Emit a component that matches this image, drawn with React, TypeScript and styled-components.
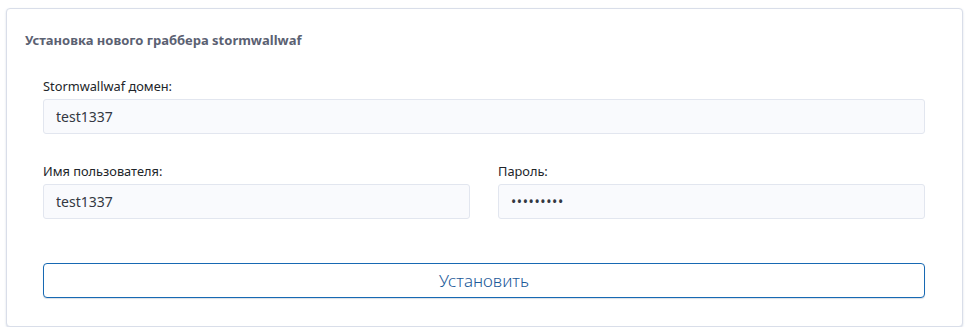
import React from 'react'
import styled, { createGlobalStyle } from 'styled-components'

const GlobalStyle = createGlobalStyle`
  html, body {
    margin: 0;
    padding: 0;
    background: #ffffff;
  }
  body {
    font-family: 'Noto Sans', 'Open Sans', Arial, sans-serif;
  }
`

const Page = styled.div`
  padding: 8px 8px 0 6px;
`

const Card = styled.div`
  border: 1px solid #d9dee9;
  border-radius: 4px;
  background: #fff;
  box-shadow: 0 1px 2px rgba(160, 175, 200, 0.45);
`

const Header = styled.div`
  padding: 23px 18px 0;
`

const Title = styled.h3`
  margin: 0;
  font-size: 13px;
  line-height: 16px;
  font-weight: 700;
  color: #5b6172;
`

const Body = styled.div`
  padding: 29px 37px 28px 36px;
  display: flex;
  flex-direction: column;
`

const Row = styled.div<{ $cols?: number; $mt?: number }>`
  display: grid;
  grid-template-columns: repeat(${p => p.$cols ?? 1}, 1fr);
  column-gap: 28px;
  margin-top: ${p => p.$mt ?? 0}px;
`

const Field = styled.label`
  display: flex;
  flex-direction: column;
  gap: 4px;
`

const LabelText = styled.span`
  font-size: 12.8px;
  line-height: 18px;
  color: #212529;
`

const Input = styled.input`
  box-sizing: border-box;
  height: 35px;
  width: 100%;
  padding: 0 12px;
  border: 1px solid #e2e6ef;
  border-radius: 3px;
  background: #f9fafd;
  font-family: inherit;
  font-size: 14px;
  color: #333842;
  outline: none;
  &[type='password'] {
    font-size: 14px;
    letter-spacing: 0.6px;
  }
`

const SubmitButton = styled.button`
  margin-top: 44px;
  height: 35px;
  width: 100%;
  border: 1px solid #1769b3;
  border-radius: 4px;
  background: #fff;
  color: #1d5a99;
  font-family: inherit;
  font-size: 17px;
  font-weight: 300;
  cursor: pointer;
  box-shadow: 0 1px 1px rgba(0, 40, 90, 0.15);
`

const App = () => {
  return (
    <>
      <GlobalStyle />
      <Page>
        <Card>
          <Header>
            <Title>Установка нового граббера stormwallwaf</Title>
          </Header>
          <Body>
            <Row>
              <Field>
                <LabelText>Stormwallwaf домен:</LabelText>
                <Input type="text" defaultValue="test1337" readOnly />
              </Field>
            </Row>
            <Row $cols={2} $mt={28}>
              <Field>
                <LabelText>Имя пользователя:</LabelText>
                <Input type="text" defaultValue="test1337" readOnly />
              </Field>
              <Field>
                <LabelText>Пароль:</LabelText>
                <Input type="password" defaultValue="test13371" readOnly />
              </Field>
            </Row>
            <SubmitButton type="button">Установить</SubmitButton>
          </Body>
        </Card>
      </Page>
    </>
  )
}

export default App
